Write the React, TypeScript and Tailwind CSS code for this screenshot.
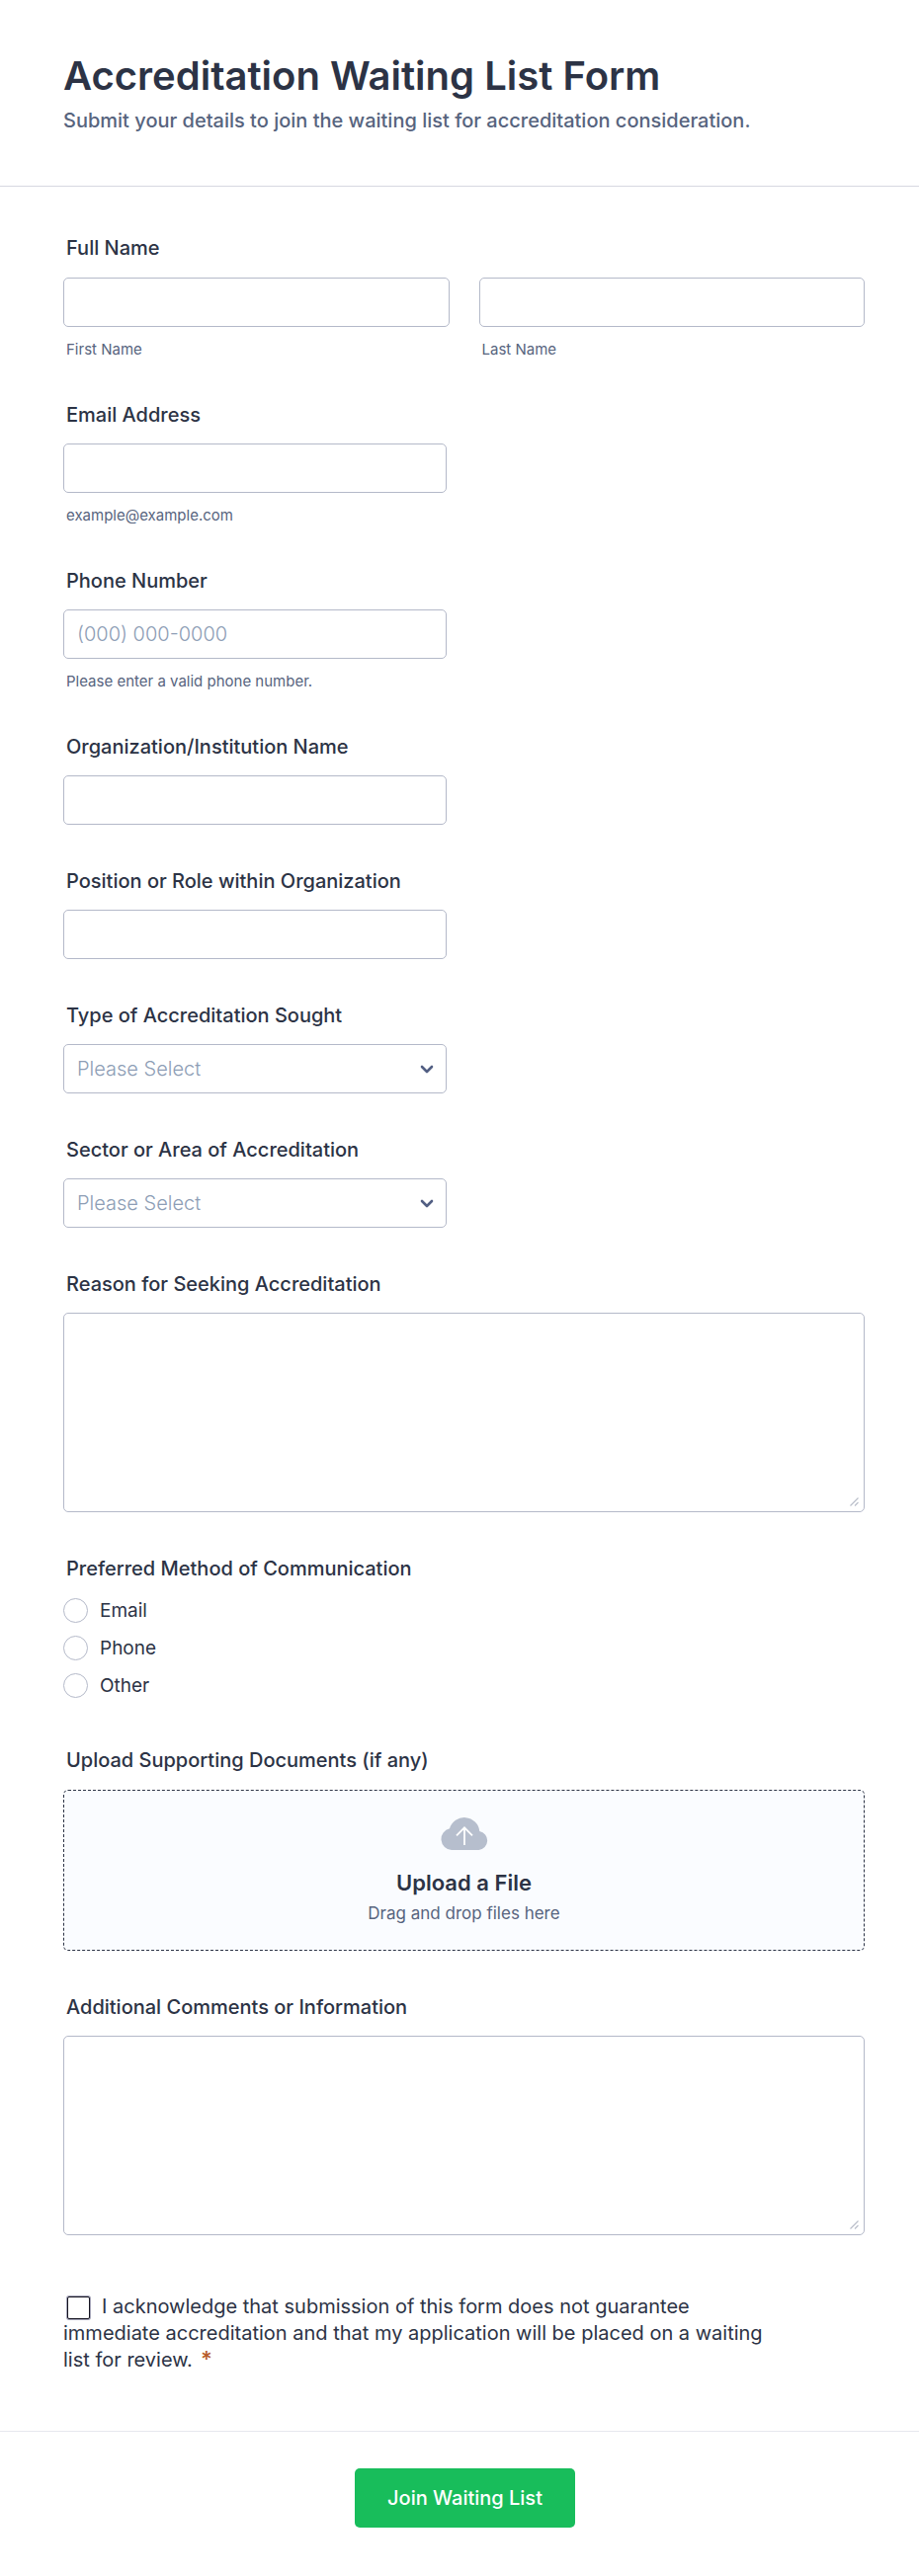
import { useState } from 'react';
import type { ReactNode, TextareaHTMLAttributes } from 'react';

const labelClass = 'block w-fit pl-[3px] text-[20px] leading-6 font-medium text-[#2c3345]';
const controlClass =
  'block h-[50px] w-full rounded-[5px] border border-[#b4b9c9] bg-white px-[13px] text-[20px] leading-6 text-[#2c3345] outline-none placeholder:font-light placeholder:text-[#8d9db5] focus:border-blue-500';

function Field({ id, label, hint, children }: { id: string; label: string; hint?: string; children: ReactNode }) {
  return (
    <div className="w-full max-w-[388px]">
      <label htmlFor={id} className={`${labelClass} mb-[17px]`}>{label}</label>
      {children}
      {hint && <p id={`${id}-hint`} className="mt-[14px] pl-[3px] text-[15px] leading-[18px] text-[#57647e]">{hint}</p>}
    </div>
  );
}

function SelectField({ id, label, options }: { id: string; label: string; options: string[] }) {
  const [value, setValue] = useState('');

  return (
    <Field id={id} label={label}>
      <div className="relative">
        <select
          id={id}
          value={value}
          onChange={(e) => setValue(e.target.value)}
          className={`${controlClass} appearance-none ${value ? '' : 'font-light text-[#8d9db5]'}`}
        >
          <option value="">Please Select</option>
          {options.map((option) => (
            <option key={option} value={option}>{option}</option>
          ))}
        </select>
        <svg
          viewBox="0 0 14 9"
          className="pointer-events-none absolute top-[21px] right-[13px] h-[9px] w-[14px]"
          fill="none"
          stroke="#525f83"
          strokeWidth="2.6"
          strokeLinecap="round"
          strokeLinejoin="round"
        >
          <path d="M2 2l5 5 5-5" />
        </svg>
      </div>
    </Field>
  );
}

function TextArea(props: TextareaHTMLAttributes<HTMLTextAreaElement>) {
  return (
    <div className="relative">
      <textarea
        {...props}
        className="block h-[202px] w-full resize-none rounded-[5px] border border-[#b4b9c9] bg-white px-[13px] py-3 text-[20px] leading-7 text-[#2c3345] outline-none focus:border-blue-500"
      />
      <svg
        viewBox="0 0 9 9"
        className="pointer-events-none absolute right-[6px] bottom-[6px] size-[9px]"
        stroke="#b8bdc9"
        strokeWidth="1.1"
        fill="none"
      >
        <path d="M.5 8.5l8-8M5 8.500l3.500-3.500" />
      </svg>
    </div>
  );
}

export default function App() {
  const [method, setMethod] = useState('');

  return (
    <form
      className="w-full bg-white font-['Inter',sans-serif] text-[#2c3345]"
      onSubmit={(e) => e.preventDefault()}
    >
      <header className="border-b border-[#d7d8e1] px-16 pt-[52px] pb-[54px]">
        <h1 className="text-[40px] leading-[50px] font-semibold">Accreditation Waiting List Form</h1>
        <p className="mt-2 text-[20px] leading-6 font-medium text-[#57647e]">
          Submit your details to join the waiting list for accreditation consideration.
        </p>
      </header>

      <div className="flex flex-col gap-[45px] pt-[50px] pr-[55px] pb-[58px] pl-16">
        <fieldset>
          <legend className={`${labelClass} mb-[18px]`}>Full Name</legend>
          <div className="grid grid-cols-2 gap-[30px]">
            <div>
              <input id="first-name" type="text" className={controlClass} />
              <label htmlFor="first-name" className="mt-[14px] block pl-[3px] text-[15px] leading-[18px] text-[#57647e]">
                First Name
              </label>
            </div>
            <div>
              <input id="last-name" type="text" className={controlClass} />
              <label htmlFor="last-name" className="mt-[14px] block pl-[3px] text-[15px] leading-[18px] text-[#57647e]">
                Last Name
              </label>
            </div>
          </div>
        </fieldset>

        <Field id="email" label="Email Address" hint="example@example.com">
          <input id="email" type="email" aria-describedby="email-hint" className={controlClass} />
        </Field>

        <Field id="phone" label="Phone Number" hint="Please enter a valid phone number.">
          <input id="phone" type="tel" placeholder="(000) 000-0000" aria-describedby="phone-hint" className={controlClass} />
        </Field>

        <Field id="organization" label="Organization/Institution Name">
          <input id="organization" type="text" className={controlClass} />
        </Field>

        <Field id="position" label="Position or Role within Organization">
          <input id="position" type="text" className={controlClass} />
        </Field>

        <SelectField
          id="type"
          label="Type of Accreditation Sought"
          options={['Institutional', 'Programmatic', 'Professional']}
        />

        <SelectField
          id="sector"
          label="Sector or Area of Accreditation"
          options={['Education', 'Healthcare', 'Business']}
        />

        <div>
          <label htmlFor="reason" className={`${labelClass} mb-[17px]`}>Reason for Seeking Accreditation</label>
          <TextArea id="reason" />
        </div>

        <fieldset className="pb-[6px]">
          <legend className={`${labelClass} mb-[18px]`}>Preferred Method of Communication</legend>
          <div className="flex flex-col gap-[13px]">
            {['Email', 'Phone', 'Other'].map((name) => (
              <label key={name} className="flex w-fit items-center gap-3 text-[19px] leading-[25px]">
                <input
                  type="radio"
                  name="method"
                  value={name}
                  checked={method === name}
                  onChange={() => setMethod(name)}
                  className="size-[25px] appearance-none rounded-full border border-[#b4b9c9] bg-white checked:border-[7px] checked:border-blue-600"
                />
                {name}
              </label>
            ))}
          </div>
        </fieldset>

        <div>
          <label htmlFor="documents" className={`${labelClass} mb-[18px]`}>Upload Supporting Documents (if any)</label>
          <label
            htmlFor="documents"
            className="flex cursor-pointer flex-col items-center rounded-[5px] border border-dashed border-[#2c3345] bg-[#fafcff] pt-[27px] pb-[26px]"
          >
            <svg viewBox="0 0 48 33" className="h-[33px] w-12" fill="none">
              <path
                d="M11 33A11 11 0 0 1 9 11.300A15.500 15.500 0 0 1 39.300 14A9.600 9.600 0 0 1 38.500 33Z"
                fill="#b6becd"
              />
              <path d="M24 28V10.500M16 18.300l8-8 8 8" stroke="#fff" strokeWidth="1.800" />
            </svg>
            <span className="mt-[19px] text-[22px] leading-7 font-semibold">Upload a File</span>
            <span className="mt-[6px] text-[17px] leading-[22px] text-[#57647e]">Drag and drop files here</span>
            <input id="documents" type="file" multiple className="sr-only" />
          </label>
        </div>

        <div>
          <label htmlFor="comments" className={`${labelClass} mb-[17px]`}>Additional Comments or Information</label>
          <TextArea id="comments" />
        </div>

        <div className="mt-[14px] max-w-[710px] text-[20px] leading-[27px]">
          <input
            id="acknowledge"
            type="checkbox"
            required
            className="mr-3 ml-1 size-[23px] appearance-none rounded-[2px] border border-[#14131f] bg-white align-middle shadow-[0_0_0_1px_#a5a5b8] checked:bg-blue-600"
          />
          <label htmlFor="acknowledge">
            I acknowledge that submission of this form does not guarantee immediate accreditation and that my
            application will be placed on a waiting list for review.
          </label>
          <span className="ml-2 text-[22px] leading-5 font-semibold text-[#b85c28]">*</span>
        </div>
      </div>

      <footer className="flex justify-center border-t border-[#e6e8ee] pt-[37px] pb-[49px] pl-[11px]">
        <button
          type="submit"
          className="h-[60px] rounded-[5px] bg-[#18bd5b] px-[33px] text-[20px] leading-6 font-medium text-white hover:bg-green-600"
        >
          Join Waiting List
        </button>
      </footer>
    </form>
  );
}
